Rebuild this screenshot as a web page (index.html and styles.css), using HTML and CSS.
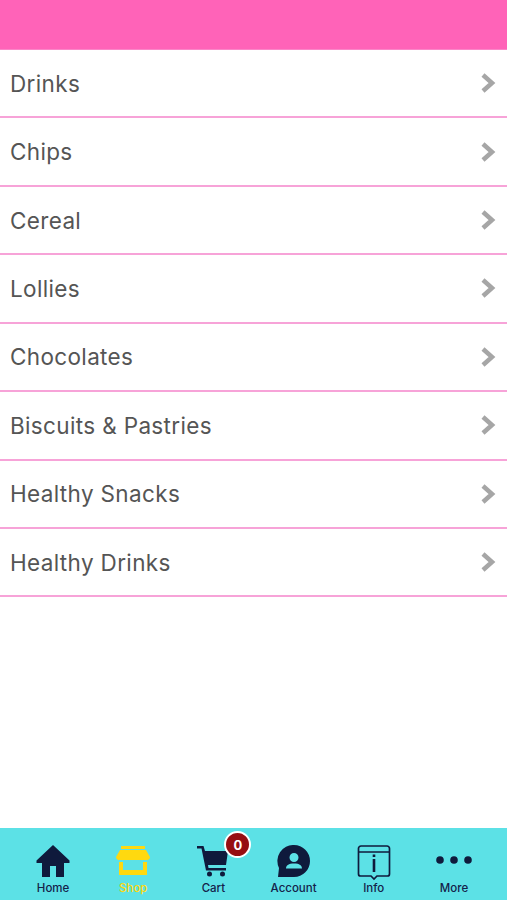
FILE: index.html
```html
<!DOCTYPE html>
<html lang="en">
<head>
<meta charset="utf-8">
<title>Shop</title>
<link rel="stylesheet" href="styles.css">
</head>
<body>
<div class="app">
  <header class="top"></header>
  <ul class="list">
    <li class="row"><span>Drinks</span><svg class="chev" viewBox="0 0 16 22"><path d="M3 3l9 8-9 8"/></svg></li>
    <li class="row"><span>Chips</span><svg class="chev" viewBox="0 0 16 22"><path d="M3 3l9 8-9 8"/></svg></li>
    <li class="row"><span>Cereal</span><svg class="chev" viewBox="0 0 16 22"><path d="M3 3l9 8-9 8"/></svg></li>
    <li class="row"><span>Lollies</span><svg class="chev" viewBox="0 0 16 22"><path d="M3 3l9 8-9 8"/></svg></li>
    <li class="row"><span>Chocolates</span><svg class="chev" viewBox="0 0 16 22"><path d="M3 3l9 8-9 8"/></svg></li>
    <li class="row"><span>Biscuits &amp; Pastries</span><svg class="chev" viewBox="0 0 16 22"><path d="M3 3l9 8-9 8"/></svg></li>
    <li class="row"><span>Healthy Snacks</span><svg class="chev" viewBox="0 0 16 22"><path d="M3 3l9 8-9 8"/></svg></li>
    <li class="row"><span>Healthy Drinks</span><svg class="chev" viewBox="0 0 16 22"><path d="M3 3l9 8-9 8"/></svg></li>
  </ul>
  <nav class="tabs">
    <a class="tab">
      <svg class="ico" viewBox="0 0 40 36"><path fill="#0f1a3c" d="M20 0L3.500 15.500v2.500H9v14h8V21h6v11h8V18h5.500v-2.500z"/></svg>
      <span>Home</span>
    </a>
    <a class="tab shop">
      <svg class="ico" viewBox="0 0 40 36"><path fill="#ffd90f" d="M8 1h24v3H8zM7 5h26l4 7c0 2-1.500 3-3 3H6c-1.500 0-3-1-3-3zM6 17h4v8h20v-8h4v13H6z"/></svg>
      <span>Shop</span>
    </a>
    <a class="tab cart">
      <svg class="ico" viewBox="0 0 40 36"><path fill="#0f1a3c" d="M4 1h6.500l1.500 5h23l-2 14H15l.5 3H33v2.500H13L8.500 3.500H4zM14 29a2.500 2.500 0 1 0 5 0 2.500 2.500 0 1 0-5 0zM27 29a2.500 2.500 0 1 0 5 0 2.500 2.500 0 1 0-5 0z"/></svg>
      <span>Cart</span>
      <b class="badge">0</b>
    </a>
    <a class="tab">
      <svg class="ico" viewBox="0 0 40 36"><path fill="#0f1a3c" fill-rule="evenodd" d="M20 0a16 16 0 0 1 0 32H4l1-9A16 16 0 0 1 20 0zm0 8a4.500 4.500 0 1 0 0 9 4.500 4.500 0 0 0 0-9zm-8 15.500h16c0-3-2.500-5-8-5s-8 2-8 5z"/></svg>
      <span>Account</span>
    </a>
    <a class="tab">
      <svg class="ico" viewBox="0 0 40 36"><path fill="none" stroke="#0f1a3c" stroke-width="1.700" d="M7 1h26a2.500 2.500 0 0 1 2.500 2.500V29a2 2 0 0 1-2 2H23l-3 3-3-3H6.500a2 2 0 0 1-2-2V3.500A2.500 2.500 0 0 1 7 1zM4.500 7h31"/><path fill="#0f1a3c" d="M18.700 14h2.600v13h-2.600zM18.700 9.500h2.600v2.600h-2.600z"/></svg>
      <span>Info</span>
    </a>
    <a class="tab">
      <svg class="ico" viewBox="0 0 40 36"><circle cx="6" cy="15" r="3.800" fill="#0f1a3c"/><circle cx="20" cy="15" r="3.800" fill="#0f1a3c"/><circle cx="34" cy="15" r="3.800" fill="#0f1a3c"/></svg>
      <span>More</span>
    </a>
  </nav>
</div>
</body>
</html>
```
FILE: styles.css
```css
* { box-sizing: border-box; }
html, body { margin: 0; padding: 0; }
body { font-family: Inter, "Open Sans", sans-serif; background: #fff; }
.app { width: 507px; height: 900px; display: flex; flex-direction: column; overflow: hidden; }
.top { height: 50px; background: #ff63b8; border-bottom: 1px solid #fb86c8; flex: none; }
.list { list-style: none; margin: 0; padding: 0; flex: 1; }
.row {
  height: 68.43px;
  padding: 0 11px 0 10px;
  display: flex;
  align-items: center;
  justify-content: space-between;
  border-bottom: 2px solid #f7a3d8;
  color: #555;
  font-size: 22.500px;
  letter-spacing: 0.350px;
}
.chev { width: 16px; height: 22px; }
.chev path { fill: none; stroke: #a6a6a6; stroke-width: 4.500; }
.tabs { height: 72px; flex: none; background: #5ce1e6; display: flex; padding: 0 13px; }
.tab {
  position: relative;
  flex: 1;
  display: flex;
  flex-direction: column;
  align-items: center;
  padding-top: 17px;
  color: #14224a;
  font-size: 11.500px;
  font-weight: 500;
}
.ico { width: 40px; height: 36px; }
.shop { color: #ffd90f; }
.badge {
  position: absolute;
  top: 3px;
  left: 51px;
  width: 27px;
  height: 27px;
  border-radius: 50%;
  background: #960e12;
  border: 2px solid #fff;
  color: #fff;
  font-size: 13px;
  font-weight: 700;
  display: flex;
  align-items: center;
  justify-content: center;
}
```
